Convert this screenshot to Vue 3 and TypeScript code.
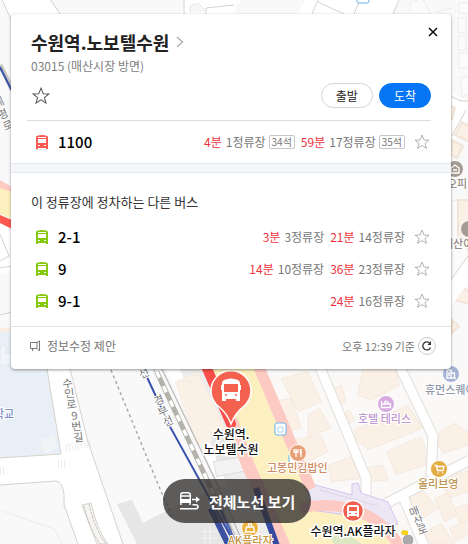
<script setup lang="ts">
import { ref } from 'vue'

interface Arrival {
  minutes: string
  stops: string
  seats?: string
}
interface Bus {
  name: string
  kind: 'express' | 'local'
  arrivals: Arrival[]
}
interface Glyph {
  ch: string
  x: number
  y: number
  r: number
}

const expressBuses: Bus[] = [
  {
    name: '1100',
    kind: 'express',
    arrivals: [
      { minutes: '4분', stops: '1정류장', seats: '34석' },
      { minutes: '59분', stops: '17정류장', seats: '35석' },
    ],
  },
]

const otherBuses: Bus[] = [
  {
    name: '2-1',
    kind: 'local',
    arrivals: [
      { minutes: '3분', stops: '3정류장' },
      { minutes: '21분', stops: '14정류장' },
    ],
  },
  {
    name: '9',
    kind: 'local',
    arrivals: [
      { minutes: '14분', stops: '10정류장' },
      { minutes: '36분', stops: '23정류장' },
    ],
  },
  {
    name: '9-1',
    kind: 'local',
    arrivals: [{ minutes: '24분', stops: '16정류장' }],
  },
]

const groups = [
  { id: 'express', title: '', buses: expressBuses },
  { id: 'others', title: '이 정류장에 정차하는 다른 버스', buses: otherBuses },
]

const roadGlyphs: Glyph[] = [
  { ch: '수', x: 63, y: 388, r: -8 },
  { ch: '인', x: 65, y: 398, r: -8 },
  { ch: '로', x: 67, y: 409, r: -8 },
  { ch: '9', x: 72, y: 420, r: -8 },
  { ch: '번', x: 72, y: 431, r: -8 },
  { ch: '길', x: 74, y: 442, r: -8 },
  { ch: '경', x: 156, y: 406, r: -25 },
  { ch: '부', x: 160, y: 417, r: -25 },
  { ch: '선', x: 165, y: 427, r: -25 },
  { ch: '매', x: 411, y: 517, r: -20 },
  { ch: '산', x: 415, y: 526, r: -20 },
  { ch: '로', x: 419, y: 535, r: -20 },
  { ch: '세', x: -4, y: 108, r: -25 },
  { ch: '평', x: 0, y: 120, r: -25 },
  { ch: '로', x: 5, y: 131, r: -25 },
  { ch: '선', x: 141, y: 379, r: -25 },
]

const starred = ref<Record<string, boolean>>({})
const toggleStar = (key: string) => {
  starred.value[key] = !starred.value[key]
}
</script>

<template>
  <main class="page">
    <svg class="map" viewBox="0 0 468 544" preserveAspectRatio="xMinYMin slice" aria-hidden="true">
      <rect width="468" height="544" fill="#f9f9f9" />

      <!-- north-west corner -->
      <path d="M0 0H48L60 14V30H11V18L2 0z" fill="#fff" />
      <path d="M2 0L11 19M51 0L60 14" class="edge" />
      <path d="M0 65L12 89" stroke="#c9c7c0" stroke-width="5" />
      <path d="M0 67L12 91" stroke="#3a53ad" stroke-width="2" />
      <path d="M0 180L12 187V195L0 191z" fill="#fdcac4" />
      <path d="M0 188L12 192V219L0 214z" fill="#fdf0bf" />
      <path d="M0 215L12 220V229L0 223z" fill="#ff5a52" />
      <path d="M0 224L12 230V272L0 275z" fill="#fff" />
      <path d="M0 234L9 256L0 261M0 268L12 266M0 315L12 312" class="edge" />
      <path d="M0 328H12V332H0z" fill="#faeee4" />
      <path d="M0 332H47L61 454L0 458z" fill="#e8eff6" />
      <path d="M0 348L6 344V353H12V364L0 366z" fill="#f1f5fa" stroke="#e0e7ee" stroke-width="1" />

      <!-- north edge -->
      <path d="M185 0H240V14H180z" fill="#fff" />
      <path d="M184 0V14M234 5L206 8V14" class="edge" />
      <path d="M190 12V6L198 3L207 12" class="hatch" />
      <path d="M301 0H360L400 0L392 14H297z" fill="#fff" />
      <path d="M303 0L297 14M318 0L312 14M318 2L346 15M360 0L354 14M399 0L393 14" class="edge" />
      <path d="M236 4L306 0L298 14H236z" fill="#f9f9f9" />
      <rect x="357" y="-9" width="12" height="12" rx="2" fill="#fff" stroke="#68b4ee" />

      <!-- east edge -->
      <g fill="#fbfbfb" stroke="#ececec">
        <path d="M410 12V3L422 -2L431 14M436 12L452 8" />
        <path d="M459 3H470V13H459zM458 18H466V33H458zM458 36H466V50H458zM459 53H470V68H459zM461 77H470V94L462 97z" />
        <path d="M452 200L468 202V270L452 300z" />
      </g>
      <path d="M450 92L468 101V120L455 142L450 150z" fill="#fff" />
      <path d="M450 95Q458 102 468 101M466 110L452 136" class="edge" />
      <g class="building">
        <path d="M450 106L455 108L452 119H450zM462 122L470 127V142L455 135zM452 140L463 146L457 158L451 155zM458 200H470V252L458 235zM461 286L470 293V304L454 300zM452 320L459 326L452 333z" />
      </g>
      <path d="M450 282L468 256V284L458 296L450 310z" fill="#fff" />
      <path d="M450 281L468 256" class="edge" />

      <!-- west streets -->
      <path d="M47 369H70L88 442L123 544H78L64 500Q62 481 56 481L0 485V458L61 454z" fill="#fff" />
      <path d="M47 369L61 454L0 458M70 369L88 442L123 544M78 544L64 505V494Q62 481 56 481L0 485" class="edge" />
      <path d="M41 439L54 436L57 447L46 454L41 447z" fill="#f1f4f7" />
      <path d="M0 510L54 529L62 544" fill="none" stroke="#ececec" />
      <path d="M66 448L92 443M58 464H65M0 471H5" stroke="#ececec" stroke-width="8" stroke-dasharray="1 2" fill="none" />
      <path d="M82 505L91 503Q97 530 108 544H97z" fill="#f6f5f3" stroke="#d6d4d0" />
      <path d="M84 506Q89 528 100 544M89 504Q95 530 106 544" fill="none" stroke="#c6c3be" stroke-dasharray="3 1" />
      <path d="M117 504L132 500L143 523L172 508L234 480L280 544H137z" fill="#e6e6e6" />
      <path d="M111 370L160 489L172 516" fill="none" stroke="#aaa" stroke-width="1.500" stroke-dasharray="3 3" />

      <!-- rail corridor -->
      <g transform="translate(150 365) scale(.3333)">
        <path d="M50 0H165L250 200L400 537H270L215 400z" fill="#ededed" />
        <path d="M45 0H85L235 370H210z" fill="#fff" />
        <path d="M75 50L145 20L240 220L140 240z" class="building" />
        <path d="M100 50L120 45L125 60L105 70zM130 30L150 30L155 45L140 48z" class="building" />
        <path d="M180 200L240 190L290 300L210 330z" fill="#e4e5e5" />
        <path d="M190 290L280 275L300 315L200 335z" fill="#f3f3f3" stroke="#ddd" stroke-width="3" />
        <path d="M5 0L240 480" stroke="#c8c7c3" stroke-width="4" />
        <path d="M30 0L215 385L280 537" stroke="#bdbdb9" stroke-width="4" fill="none" />
        <path d="M20 20L190 385L260 537" stroke="#b4b2aa" stroke-width="15" fill="none" />
        <path d="M20 20L190 385L260 537" stroke="#fff" stroke-width="10" stroke-dasharray="20 28" fill="none" />
        <path d="M-12 30L60 185L190 420L255 537" stroke="#3650ae" stroke-width="6" fill="none" />
        <path d="M182 430L238 545" stroke="#3c4fa0" stroke-width="18" />
        <path d="M210 430L262 545" stroke="#5266b6" stroke-width="8" />
        <path d="M155 500H200M155 520H200M165 490V540M180 490V540" stroke="#f3f3f3" stroke-width="3" />
      </g>

      <!-- east blocks -->
      <path d="M262 369H468V544H300z" fill="#faf9f8" />
      <g transform="translate(308 365) scale(.3333)" class="building">
        <path d="M165 12L255 0L275 60L190 105L148 90z" />
        <path d="M0 150L35 130L70 190L0 215z" />
        <path d="M-80 40L0 20L40 110L-30 140z" />
        <path d="M-110 110L-50 100L-20 190L-70 200z" />
        <path d="M-80 230L40 210L60 260L-40 310z" />
        <path d="M75 70L100 60L115 110L90 120z" />
        <path d="M100 145L125 135L140 165L115 180z" />
        <path d="M140 195L300 120L345 190L180 255L145 225z" />
        <path d="M235 260L340 215L355 260L350 300L265 330z" />
        <path d="M60 300L130 275L160 340L70 350z" />
        <path d="M175 310L225 300L240 345L185 350z" />
        <path d="M395 200L440 175L480 200V240L405 265L390 240z" />
        <path d="M400 345L480 315V380L420 400z" />
        <path d="M290 390L340 370L390 430L330 470z" />
        <path d="M380 400L420 385L450 450L410 470z" />
        <path d="M440 430L480 415V470L455 480z" />
        <path d="M350 500L400 475L440 537H370z" />
        <path d="M425 490L470 470L480 510L440 530z" />
      </g>
      <g fill="none" stroke="#e2dfdb" stroke-width="11">
        <path d="M319 365L366 478V496" />
        <path d="M399 365L433 436L431 476" />
        <path d="M470 460L385 504" />
        <path d="M402 494L424 546" />
      </g>
      <g fill="none" stroke="#fff" stroke-width="9">
        <path d="M319 365L366 478V496" />
        <path d="M399 365L433 436L431 476" />
        <path d="M470 460L385 504" />
        <path d="M402 494L424 546" />
      </g>

      <!-- main avenue -->
      <path d="M212 369H259L306 478L316 507L348 509L374 522L392 544H286L234 425z" fill="#fdf0c0" />
      <path d="M330 536L345 532L362 544H334z" fill="#dce8c4" />
      <path d="M308 483L352 495V484L358 483L361 493L388 502L398 524L394 525L370 518L310 510z" fill="#ede6f5" stroke="#d5c5ee" />
      <path d="M320 490L378 506" fill="none" stroke="#ddd6e4" />
      <path d="M258 365L294 450L311 489M300 508Q330 502 358 511Q385 522 401 548" fill="none" stroke="#fccac3" stroke-width="11" />
      <path d="M231 420L248 465L284 546" fill="none" stroke="#fccac3" stroke-width="13" />
      <path d="M256 488L277 546" stroke="#354a9e" stroke-width="6" />
      <path d="M206 366L231 424" stroke="#fb4f4b" stroke-width="10" stroke-linecap="round" />
      <rect x="275" y="423" width="11" height="12" rx="2" fill="#fff" stroke="#68b4ee" />
      <path d="M278 427h5v5h-5z" fill="none" stroke="#aed5f2" />
      <rect x="289" y="454" width="9" height="9" rx="2" fill="#fff" stroke="#68b4ee" />

      <!-- street names -->
      <text
        v-for="(g, i) in roadGlyphs"
        :key="i"
        class="road-name"
        :x="g.x"
        :y="g.y"
        :transform="`rotate(${g.r} ${g.x} ${g.y})`"
      >{{ g.ch }}</text>

      <!-- places -->
      <g stroke="#fff" stroke-width="1">
        <circle cx="386" cy="404" r="8.500" fill="#d8abe0" />
        <circle cx="439" cy="469" r="8.500" fill="#e3ad43" />
        <circle cx="451" cy="374" r="8.500" fill="#a5b3d5" />
        <circle cx="455" cy="169" r="8.500" fill="#a49c91" />
        <circle cx="469" cy="229" r="8.500" fill="#a49c91" />
        <circle cx="298" cy="453" r="8.500" fill="#e8a176" />
        <circle cx="250" cy="528" r="8.500" fill="#ecb23f" />
        <circle cx="408" cy="540" r="6" fill="#aaa" />
        <circle cx="353" cy="511" r="10.500" fill="#f4604f" stroke-width="1.500" />
      </g>
      <path d="M401 532l2-2 5 1v4h-6z" fill="#f6d21c" />
      <g fill="none" stroke="#fff" stroke-width="1.300">
        <path d="M381.500 401v6.500h9v-3.500h-9M385 403.500v-2h2M388 401v3" />
        <path d="M434.500 465.500h2l1 5h5.500l1-4h-7M437.500 473h1M442 473h1" />
        <path d="M447 378v-8h4v8M451 373h3.500v5M446 378h10M449 372v4" />
        <path d="M451 173v-5l4-3 4 3v5zM453 170h4" />
        <path d="M296 449v8M294 449v3h4v-3M301 449v8M300.500 449v4h1.500" />
        <path d="M246.500 527h7l1 5h-9zM248.500 527v-3h3v3" />
      </g>
      <path class="bus-white" fill-rule="evenodd" transform="translate(347 505)" d="M2 0h8q2 0 2 2v10h-2v-1H2v1H0V2Q0 0 2 0zM2 2v4h8V2zM2 8v1h2V8zM8 8v1h2V8z" />

      <g class="place">
        <text x="358" y="423" fill="#bf98d1">호텔 테리스</text>
        <text x="418" y="488" fill="#bd9450">올리브영</text>
        <text x="425" y="394" fill="#8e97a8">휴먼스퀘어</text>
        <text x="447" y="188" fill="#958c83">오피스</text>
        <text x="443" y="248" fill="#958c83">매산어린이</text>
        <text x="267" y="472" fill="#cf8b5f">고봉민김밥인</text>
        <text x="228" y="545" fill="#c6953e">AK플라자</text>
        <text x="-6" y="418" fill="#7f8ecb">학교</text>
      </g>

      <!-- selected stop marker -->
      <path d="M231 424Q227 413 218 406A20 20 0 1 1 244 406Q235 413 231 424z" fill="#f5614f" stroke="#fff" stroke-width="1.500" />
      <path
        fill="#fff"
        fill-rule="evenodd"
        d="M224 380Q231 377 238 380Q240 381 240 383V385h1v5h-1v11h-4v-2h-10v2h-4V390h-1v-5h1V383Q222 381 224 380zM224 384v8h14v-8zM225 395a1 1 0 1 0 2 0a1 1 0 1 0-2 0zM235 395a1 1 0 1 0 2 0a1 1 0 1 0-2 0z"
      />
      <g class="stop-name">
        <text x="231" y="439" text-anchor="middle">수원역.</text>
        <text x="231" y="454" text-anchor="middle">노보텔수원</text>
        <text x="353" y="536" text-anchor="middle">수원역.AK플라자</text>
      </g>
    </svg>

    <section class="panel">
      <header class="head">
        <div class="title-row">
          <h1>
            <a href="#stop" class="title">
              수원역.노보텔수원
              <svg width="8" height="12" viewBox="0 0 8 12"><path d="M1 1l5.500 5L1 11" fill="none" stroke="#aaa" stroke-width="1.200" /></svg>
            </a>
          </h1>
          <button type="button" class="icon-btn" aria-label="닫기">
            <svg width="10" height="10" viewBox="0 0 10 10"><path d="M1 1l8 8M9 1l-8 8" stroke="#000" stroke-width="1.400" /></svg>
          </button>
        </div>
        <p class="sub">03015 (매산시장 방면)</p>
        <div class="actions">
          <button type="button" class="icon-btn star dark" :class="{ on: starred.stop }" aria-label="즐겨찾기" @click="toggleStar('stop')">
            <svg width="18" height="18" viewBox="0 0 16 16"><path d="M8 1l2 5 5 .2-4 3.200 1.500 5L8 11.500l-4.500 2.900L5 9.400 1 6.200 6 6z" /></svg>
          </button>
          <button type="button" class="pill">출발</button>
          <button type="button" class="pill primary">도착</button>
        </div>
      </header>

      <section v-for="group in groups" :key="group.id" :class="group.id">
        <h2 v-if="group.title">{{ group.title }}</h2>
        <ul>
          <li v-for="bus in group.buses" :key="bus.name" class="bus">
            <svg class="bus-icon" :class="bus.kind" width="12" height="14" viewBox="0 0 12 14">
              <path fill-rule="evenodd" d="M2 .500Q6-.500 10 .500Q12 1 12 2V14h-2v-1H2v1H0V2Q0 1 2 .500zM2 2v1h8V2zM2 4v4h8V4zM2 10v1h2V10zM8 10v1h2V10z" />
            </svg>
            <a href="#bus" class="name">{{ bus.name }}</a>
            <div class="arrivals">
              <span v-for="a in bus.arrivals" :key="a.minutes" class="arrival">
                <strong>{{ a.minutes }}</strong>
                <span>{{ a.stops }}</span>
                <em v-if="a.seats">{{ a.seats }}</em>
              </span>
            </div>
            <button type="button" class="icon-btn star" :class="{ on: starred[bus.name] }" aria-label="즐겨찾기" @click="toggleStar(bus.name)">
              <svg width="16" height="16" viewBox="0 0 16 16"><path d="M8 1l2 5 5 .2-4 3.200 1.500 5L8 11.500l-4.500 2.900L5 9.400 1 6.200 6 6z" /></svg>
            </button>
          </li>
          <li v-if="group.id === 'others'" class="bus next">
            <button type="button" class="icon-btn star" aria-label="즐겨찾기">
              <svg width="16" height="16" viewBox="0 0 16 16"><path d="M8 1l2 5 5 .2-4 3.200 1.500 5L8 11.500l-4.500 2.900L5 9.400 1 6.200 6 6z" /></svg>
            </button>
          </li>
        </ul>
      </section>

      <footer class="foot">
        <a href="#suggest" class="suggest">
          <svg width="12" height="12" viewBox="0 0 12 12"><path d="M8 2.500H1.500v6H8M3.500 8.500v2.500M8 2.500L10.500 1v10L8 8.500z" fill="none" stroke="#777" /></svg>
          정보수정 제안
        </a>
        <div class="updated">
          <span>오후 12:39 기준</span>
          <button type="button" class="refresh" aria-label="새로고침">
            <svg width="10" height="10" viewBox="0 0 10 10"><path d="M8.500 6.500A4 4 0 1 1 8 2.500" fill="none" stroke="#333" stroke-width="1.300" /><path d="M9 0v4H5.500z" fill="#333" /></svg>
          </button>
        </div>
      </footer>
    </section>

    <button type="button" class="routes">
      <svg width="22" height="20" viewBox="0 0 22 20" fill="none" stroke="#fff" stroke-width="1.400">
        <path d="M1.700 12V4Q1.700 1.700 4 1.700h5Q11.300 1.700 11.300 4v8M1.700 5h9.600M2 14v-2M11 14v-2" />
        <path d="M1 8h11v4H1z" fill="#fff" stroke="none" />
        <path d="M13 8.500h6M1 17.700h15.500q2.500 0 2.500-2t-2.500-2h-3" stroke-width="1.600" />
        <path d="M17 5.500l4 3-4 3z" fill="#fff" stroke="none" />
      </svg>
      전체노선 보기
    </button>
  </main>
</template>

<style>
body {
  margin: 0;
}
</style>

<style scoped>
.page {
  position: relative;
  min-height: 100vh;
  overflow: hidden;
  box-sizing: border-box;
  padding: 14px 17px 20px 11px;
  font-family: "Noto Sans CJK KR", "Noto Sans", sans-serif;
  font-size: 12px;
  color: #333;
}
.map {
  position: absolute;
  inset: 0;
  width: 100%;
  height: 100%;
}
.edge {
  fill: none;
  stroke: #d6d3cd;
}
.hatch {
  fill: #f6f6f6;
  stroke: #e8e8e8;
}
.building {
  fill: #fbf0e6;
  stroke: #f1e4d8;
}
g.building {
  stroke-width: 2;
}
.road-name {
  font-size: 11px;
  fill: #777;
  paint-order: stroke;
  stroke: #fff;
  stroke-width: 2px;
}
.bus-white {
  fill: #fff;
}
.place {
  font-size: 11px;
  font-weight: 500;
  paint-order: stroke;
  stroke: #fff;
  stroke-width: 2px;
}
.stop-name {
  font-size: 12px;
  font-weight: 500;
  fill: #111;
  paint-order: stroke;
  stroke: #fff;
  stroke-width: 3px;
}
.panel {
  position: relative;
  background: #fff;
  border-radius: 4px;
  box-shadow: 0 1px 3px rgba(0, 0, 0, 0.4);
}
button {
  font: inherit;
  cursor: pointer;
}
a {
  color: inherit;
  text-decoration: none;
}
h1,
h2,
p,
ul {
  margin: 0;
  padding: 0;
}
.head {
  margin: 0 20px 0 16px;
  padding: 14px 0 12px 4px;
  border-bottom: 1px solid #ddd;
}
.title-row {
  display: flex;
  justify-content: space-between;
  align-items: flex-start;
}
h1 {
  font-size: 18px;
  line-height: 28px;
  font-weight: 700;
  color: #222;
}
.title {
  display: flex;
  align-items: center;
  gap: 7px;
}
.icon-btn {
  display: flex;
  padding: 0;
  border: 0;
  background: none;
}
.title-row .icon-btn {
  margin: -2px -8px 0 0;
  padding: 1px;
}
.sub {
  line-height: 20px;
  color: #808080;
}
.actions {
  display: flex;
  align-items: center;
  gap: 6px;
  padding-top: 7px;
}
.actions .star {
  margin: 0 auto 0 1px;
}
.star path {
  fill: none;
  stroke: #aaa;
  stroke-width: 0.9;
}
.star.dark path {
  stroke: #555;
}
.star.on path {
  fill: #ffc61a;
}
.pill {
  height: 25px;
  padding: 0 14px;
  border: 1px solid #d5d5d5;
  border-radius: 13px;
  background: #fff;
  color: #222;
  line-height: 23px;
}
.pill.primary {
  border-color: #0475f4;
  background: #0475f4;
  color: #fff;
}
ul {
  list-style: none;
}
.bus {
  display: flex;
  align-items: center;
  height: 32px;
  padding: 0 21px 0 25px;
}
.bus-icon.express {
  fill: #f95a52;
}
.bus-icon.local {
  fill: #86c80a;
}
.name {
  margin-left: 10px;
  font-size: 15px;
  line-height: 24px;
  font-weight: 500;
  color: #000;
}
.arrivals {
  display: flex;
  gap: 6px;
  margin-left: auto;
  line-height: 18px;
}
.arrival {
  display: flex;
  align-items: center;
  gap: 4px;
  color: #777;
}
.arrival strong {
  font-weight: 400;
  color: #ef3340;
}
.arrival em {
  margin-left: -1px;
  padding: 0 2px;
  border: 1px solid #c5c5cb;
  border-radius: 2px;
  font-size: 10px;
  line-height: 12px;
  font-style: normal;
}
.bus .star {
  margin-left: 9px;
}
.express {
  border-bottom: 1px solid #e3e7ee;
}
.express .bus {
  height: 42px;
}
.others {
  height: 162px;
  overflow: hidden;
}
.others::before {
  content: "";
  display: block;
  height: 8px;
  background: #f4f6fa;
  border-bottom: 1px solid #e3e7ee;
}
h2 {
  padding: 17px 20px 7px;
  font-size: 13px;
  line-height: 24px;
  font-weight: 400;
  color: #333;
}
.next .star {
  margin-left: auto;
}
.foot {
  display: flex;
  align-items: center;
  justify-content: space-between;
  padding: 10px 15px 14px 18px;
  border-top: 1px solid #e5e5e5;
  line-height: 18px;
  color: #777;
}
.suggest {
  display: flex;
  align-items: center;
  gap: 6px;
}
.updated {
  display: flex;
  align-items: center;
  gap: 3px;
  font-size: 11px;
}
.refresh {
  display: flex;
  align-items: center;
  justify-content: center;
  box-sizing: border-box;
  width: 18px;
  height: 18px;
  padding: 0;
  border: 1px solid #ccc;
  border-radius: 50%;
  background: #fff;
}
.routes {
  position: absolute;
  left: 163px;
  bottom: 21px;
  display: flex;
  align-items: center;
  gap: 8px;
  height: 44px;
  padding: 0 16px;
  border: 0;
  border-radius: 22px;
  background: rgba(50, 48, 46, 0.78);
  color: #fff;
  font-size: 15px;
  font-weight: 700;
}
</style>
